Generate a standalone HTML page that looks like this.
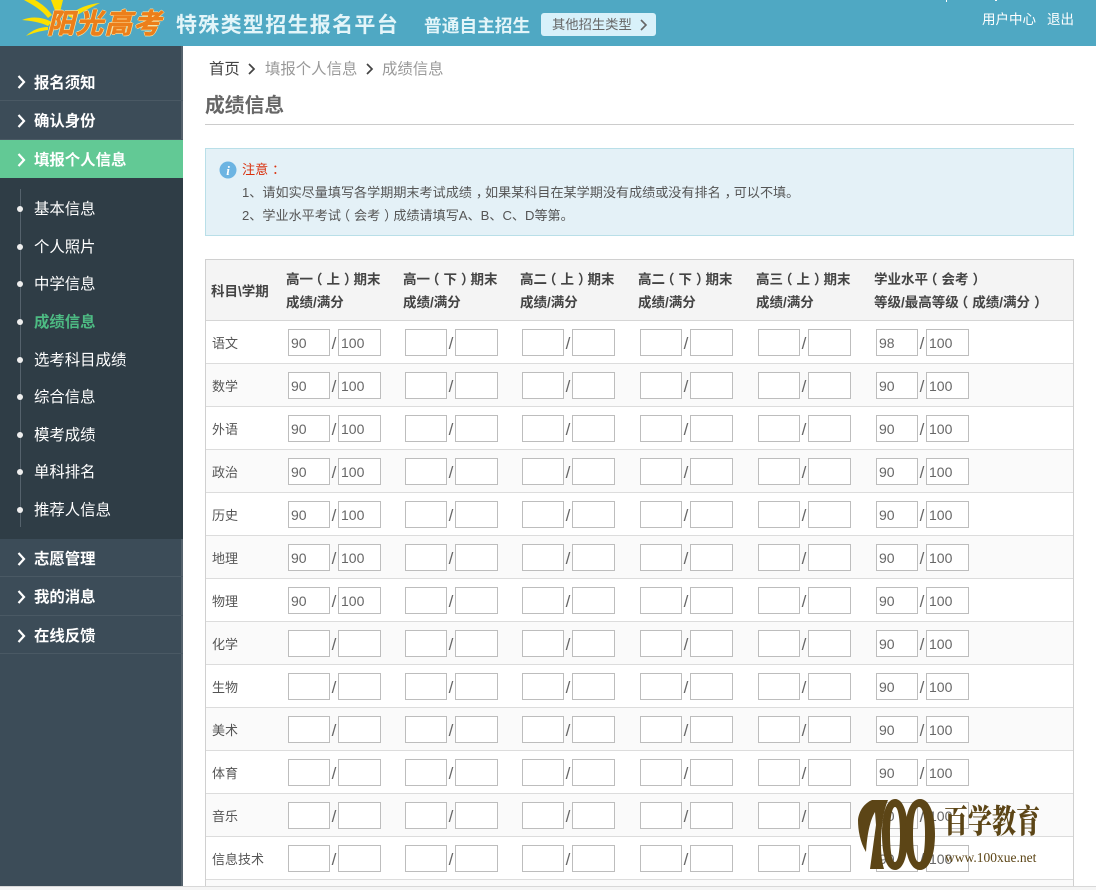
<!DOCTYPE html>
<html lang="zh"><head><meta charset="utf-8"><title>成绩信息</title>
<style>
*{box-sizing:border-box}
html,body{margin:0;padding:0;width:1096px;height:890px;overflow:hidden;background:#f5f5f5}
body{position:relative;font:14px "Liberation Sans","Noto Sans CJK SC",sans-serif;color:#555}
.a{position:absolute;white-space:nowrap}
u{text-decoration:none;position:relative;left:.3em}
s{text-decoration:none;position:relative;left:-.3em}
#hd{position:absolute;left:0;top:0;width:1096px;height:46px;background:#4fa8c3;overflow:hidden}
#main{position:absolute;left:183px;top:46px;width:913px;height:840px;background:#fff;overflow:hidden}
#foot{position:absolute;left:0;top:886px;width:1096px;height:1px;background:#d8d8d8}
#sb{position:absolute;left:0;top:46px;width:183px;height:840px;background:#3c4c58;border-right:2px solid #55626c}
.m{position:absolute;left:0;width:183px;height:38px;line-height:41px;padding-left:34px;color:#fff;font-weight:bold;font-size:15.400px;border-bottom:1px solid #4a5964}
.m svg{position:absolute;left:17px;top:13px}
.on{background:#62c995;border-bottom:0}
#sub{position:absolute;left:0;top:132px;width:183px;height:361px;background:#2f3d46}
#sub i{position:absolute;left:20px;top:11px;width:1px;height:338px;background:#55626c}
.s{position:absolute;left:34px;color:#fff;line-height:20px;font-size:15.400px}
.s:before{content:"";position:absolute;left:-17px;top:6px;width:6px;height:6px;border-radius:50%;background:#eee}
table{position:absolute;left:205px;top:259px;width:869px;border-collapse:separate;border-spacing:0;table-layout:fixed;border:1px solid #d0d0d0;border-bottom:0;background:#fff}
th{height:61px;background:#f4f4f4;border-bottom:1px solid #d5d5d5;font-size:13.500px;font-weight:bold;color:#444;text-align:left;line-height:23px;padding:2px 0 0 6px;white-space:nowrap}
th:first-child{padding-left:5px}
td{height:43px;border-bottom:1px solid #dcdcdc;padding:0 0 0 8px;font-size:0;white-space:nowrap;vertical-align:middle}
td:first-child{font-size:13px;padding-left:6px;color:#555}
tr:nth-child(even) td{background:#fafafa}
input{display:inline-block;vertical-align:middle;width:42px;height:27px;border:1px solid #bdbdbd;background:#fff;padding:1px 0 0 2px;margin:0;font:14px "Liberation Sans",sans-serif;color:#666;border-radius:0}
input+b+input{width:43px}
b{display:inline-block;vertical-align:middle;width:8px;font:17px "Liberation Sans",sans-serif;color:#666;text-align:center;position:relative;left:0;top:2px}
</style></head><body>

<div id="hd">
<svg class="a" style="left:18px;top:0" width="90" height="40" viewBox="0 0 90 40"><g fill="#fce000"><path d="M4 20C14 16 24 17 34 22L30 26C22 22 13 21 4 20Z"/><path d="M8 36C14 30 22 27 30 27L30 30C22 31 15 33 8 36Z"/><path d="M6 0L17 0C24 4 30 9 34 15L30 18C24 10 15 5 6 0Z"/><path d="M33 0L45 0L42 12L38 13Z"/><path d="M50 16C60 8 70 4 82 3C74 7 64 12 54 18Z"/></g></svg>
<div class="a" style="left:47px;top:4px;font-size:27.500px;line-height:40px;font-weight:bold;font-style:italic;color:#ec7f1a;letter-spacing:1.300px;-webkit-text-stroke:.7px #ec7f1a;text-shadow:1px 0 #ffe9a8,-1px 0 #ffe9a8,0 1px #ffe9a8,0 -1px #ffe9a8">阳光高考</div>
<div class="a" style="left:176px;top:11px;font-size:21px;line-height:30px;font-weight:bold;color:#e3f5f9;letter-spacing:1.300px">特殊类型招生报名平台</div>
<div class="a" style="left:424px;top:13px;font-size:17.700px;line-height:27px;font-weight:bold;color:#e3f5f9">普通自主招生</div>
<div class="a" style="left:541px;top:13px;width:115px;height:23px;background:#d8f1fa;border-radius:3px;color:#666;font-size:13.300px;line-height:23px;padding-left:11px">其他招生类型<svg class="a" style="left:98px;top:6px" width="9" height="12" viewBox="0 0 9 12"><path d="M2 1L7 6L2 11" fill="none" stroke="#666" stroke-width="1.6"/></svg></div>
<div class="a" style="left:982px;top:11px;font-size:13.500px;line-height:18px;color:#fff">用户中心</div>
<div class="a" style="left:1047px;top:11px;font-size:13.500px;line-height:18px;color:#fff">退出</div>
<div class="a" style="left:946px;top:0;width:1px;height:2px;background:#fff"></div>
<div class="a" style="left:995px;top:0;width:2px;height:1px;background:#fff"></div>
</div>

<div id="sb">
<div class="m" style="top:16px;height:39px;line-height:43px"><svg width="9" height="14" viewBox="0 0 9 14"><path d="M1.5 1L7 7L1.500 13" fill="none" stroke="#fff" stroke-width="2.2"/></svg>报名须知</div>
<div class="m" style="top:55px;height:39px"><svg width="9" height="14" viewBox="0 0 9 14"><path d="M1.5 1L7 7L1.500 13" fill="none" stroke="#fff" stroke-width="2.2"/></svg>确认身份</div>
<div class="m on" style="top:94px"><svg width="9" height="14" viewBox="0 0 9 14"><path d="M1.5 1L7 7L1.500 13" fill="none" stroke="#fff" stroke-width="2.2"/></svg>填报个人信息</div>
<div id="sub"><i></i>
<div class="s" style="top:22px">基本信息</div>
<div class="s" style="top:60px">个人照片</div>
<div class="s" style="top:97px">中学信息</div>
<div class="s" style="top:135px;color:#4dbb83;font-weight:bold">成绩信息</div>
<div class="s" style="top:173px">选考科目成绩</div>
<div class="s" style="top:210px">综合信息</div>
<div class="s" style="top:248px">模考成绩</div>
<div class="s" style="top:285px">单科排名</div>
<div class="s" style="top:323px">推荐人信息</div>
</div>
<div class="m" style="top:493px"><svg width="9" height="14" viewBox="0 0 9 14"><path d="M1.5 1L7 7L1.500 13" fill="none" stroke="#fff" stroke-width="2.2"/></svg>志愿管理</div>
<div class="m" style="top:531px;height:39px"><svg width="9" height="14" viewBox="0 0 9 14"><path d="M1.5 1L7 7L1.500 13" fill="none" stroke="#fff" stroke-width="2.2"/></svg>我的消息</div>
<div class="m" style="top:570px;height:38px"><svg width="9" height="14" viewBox="0 0 9 14"><path d="M1.5 1L7 7L1.500 13" fill="none" stroke="#fff" stroke-width="2.2"/></svg>在线反馈</div>
</div>

<div id="main"></div>
<div id="foot"></div>

<div class="a" style="left:209px;top:60px;line-height:20px;font-size:15.400px;color:#444">首页</div>
<svg class="a" style="left:247px;top:63px" width="9" height="12" viewBox="0 0 9 12"><path d="M2 1L7 6L2 11" fill="none" stroke="#444" stroke-width="1.7"/></svg>
<div class="a" style="left:265px;top:60px;line-height:20px;font-size:15.400px;color:#999">填报个人信息</div>
<svg class="a" style="left:365px;top:63px" width="9" height="12" viewBox="0 0 9 12"><path d="M2 1L7 6L2 11" fill="none" stroke="#444" stroke-width="1.7"/></svg>
<div class="a" style="left:382px;top:60px;line-height:20px;font-size:15.400px;color:#999">成绩信息</div>
<div class="a" style="left:205px;top:92px;font-size:19.800px;line-height:28px;font-weight:bold;color:#666">成绩信息</div>
<div class="a" style="left:205px;top:124px;width:869px;height:1px;background:#ccc"></div>

<div class="a" style="left:205px;top:148px;width:869px;height:88px;background:#e4f1f7;border:1px solid #b9dfe8"></div>
<svg class="a" style="left:219px;top:161px" width="18" height="18" viewBox="0 0 18 18"><circle cx="9" cy="9" r="8.500" fill="#6cb4e2"/><text x="9" y="14" text-anchor="middle" font-family="Liberation Serif" font-size="13" font-weight="bold" font-style="italic" fill="#fff">i</text></svg>
<div class="a" style="left:242px;top:160px;font-size:13.100px;line-height:20px;color:#d9300c">注意<u>：</u></div>
<div class="a" style="left:242px;top:183px;font-size:13.100px;line-height:20px;color:#555">1、请如实尽量填写各学期期末考试成绩<u>，</u>如果某科目在某学期没有成绩或没有排名<u>，</u>可以不填。</div>
<div class="a" style="left:242px;top:206px;font-size:13.100px;line-height:20px;color:#555">2、学业水平考试<s>（</s>会考<u>）</u>成绩请填写A、B、C、D等第。</div>

<table>
<colgroup><col style="width:74px"><col style="width:117px"><col style="width:117px"><col style="width:118px"><col style="width:118px"><col style="width:118px"><col></colgroup>
<thead><tr><th>科目\学期</th><th>高一<s>（</s>上<u>）</u>期末<br>成绩/满分</th><th>高一<s>（</s>下<u>）</u>期末<br>成绩/满分</th><th>高二<s>（</s>上<u>）</u>期末<br>成绩/满分</th><th>高二<s>（</s>下<u>）</u>期末<br>成绩/满分</th><th>高三<s>（</s>上<u>）</u>期末<br>成绩/满分</th><th>学业水平<s>（</s>会考<u>）</u><br>等级/最高等级<s>（</s>成绩/满分<u>）</u></th></tr></thead>
<tbody>
<tr><td>语文</td><td><input value="90"><b>/</b><input value="100"></td><td><input><b>/</b><input></td><td><input><b>/</b><input></td><td><input><b>/</b><input></td><td><input><b>/</b><input></td><td><input value="98"><b>/</b><input value="100"></td></tr>
<tr><td>数学</td><td><input value="90"><b>/</b><input value="100"></td><td><input><b>/</b><input></td><td><input><b>/</b><input></td><td><input><b>/</b><input></td><td><input><b>/</b><input></td><td><input value="90"><b>/</b><input value="100"></td></tr>
<tr><td>外语</td><td><input value="90"><b>/</b><input value="100"></td><td><input><b>/</b><input></td><td><input><b>/</b><input></td><td><input><b>/</b><input></td><td><input><b>/</b><input></td><td><input value="90"><b>/</b><input value="100"></td></tr>
<tr><td>政治</td><td><input value="90"><b>/</b><input value="100"></td><td><input><b>/</b><input></td><td><input><b>/</b><input></td><td><input><b>/</b><input></td><td><input><b>/</b><input></td><td><input value="90"><b>/</b><input value="100"></td></tr>
<tr><td>历史</td><td><input value="90"><b>/</b><input value="100"></td><td><input><b>/</b><input></td><td><input><b>/</b><input></td><td><input><b>/</b><input></td><td><input><b>/</b><input></td><td><input value="90"><b>/</b><input value="100"></td></tr>
<tr><td>地理</td><td><input value="90"><b>/</b><input value="100"></td><td><input><b>/</b><input></td><td><input><b>/</b><input></td><td><input><b>/</b><input></td><td><input><b>/</b><input></td><td><input value="90"><b>/</b><input value="100"></td></tr>
<tr><td>物理</td><td><input value="90"><b>/</b><input value="100"></td><td><input><b>/</b><input></td><td><input><b>/</b><input></td><td><input><b>/</b><input></td><td><input><b>/</b><input></td><td><input value="90"><b>/</b><input value="100"></td></tr>
<tr><td>化学</td><td><input><b>/</b><input></td><td><input><b>/</b><input></td><td><input><b>/</b><input></td><td><input><b>/</b><input></td><td><input><b>/</b><input></td><td><input value="90"><b>/</b><input value="100"></td></tr>
<tr><td>生物</td><td><input><b>/</b><input></td><td><input><b>/</b><input></td><td><input><b>/</b><input></td><td><input><b>/</b><input></td><td><input><b>/</b><input></td><td><input value="90"><b>/</b><input value="100"></td></tr>
<tr><td>美术</td><td><input><b>/</b><input></td><td><input><b>/</b><input></td><td><input><b>/</b><input></td><td><input><b>/</b><input></td><td><input><b>/</b><input></td><td><input value="90"><b>/</b><input value="100"></td></tr>
<tr><td>体育</td><td><input><b>/</b><input></td><td><input><b>/</b><input></td><td><input><b>/</b><input></td><td><input><b>/</b><input></td><td><input><b>/</b><input></td><td><input value="90"><b>/</b><input value="100"></td></tr>
<tr><td>音乐</td><td><input><b>/</b><input></td><td><input><b>/</b><input></td><td><input><b>/</b><input></td><td><input><b>/</b><input></td><td><input><b>/</b><input></td><td><input value="90"><b>/</b><input value="100"></td></tr>
<tr><td>信息技术</td><td><input><b>/</b><input></td><td><input><b>/</b><input></td><td><input><b>/</b><input></td><td><input><b>/</b><input></td><td><input><b>/</b><input></td><td><input value="90"><b>/</b><input value="100"></td></tr>
</tbody></table>
<div class="a" style="left:205px;top:880px;width:869px;height:6px;background:#fafafa;border:1px solid #d0d0d0;border-width:0 1px"></div>

<svg class="a" style="left:855px;top:795px" width="90" height="80" viewBox="855 795 90 80"><path fill="#5c4516" d="M872 800H888C883 812 881 830 881 845C881 855 882 862 884 869H870L876 825L875 812C870 820 867 835 866 852C860 842 858 830 858 820C859 810 865 803 872 800Z"/><path fill="#5c4516" fill-rule="evenodd" d="M895 799C904 799 908 815 908 834C908 854 904 870 895 870C886 870 882 854 882 834C882 815 886 799 895 799ZM895 807C892 807 890 818 890 834C890 851 892 862 895 862C898 862 900 851 900 834C900 818 898 807 895 807Z"/><path fill="#5c4516" fill-rule="evenodd" d="M920 799C930 799 935 815 935 834C935 854 930 870 920 870C910 870 905 854 905 834C905 815 910 799 920 799ZM919 807C915 807 913 818 913 834C913 851 915 862 919 862C923 862 925 851 925 834C925 818 923 807 919 807Z"/></svg>
<div class="a" style="left:944px;top:803px;font-family:'Liberation Serif','Noto Serif CJK SC',serif;font-size:24px;line-height:40px;font-weight:900;color:#5c4516;transform:scaleY(1.35);transform-origin:50% 50%">百学教育</div>
<div class="a" style="left:945px;top:850px;font-family:'Liberation Serif',serif;font-size:13.500px;line-height:16px;color:#5c4516">www.100xue.net</div>
</body></html>
